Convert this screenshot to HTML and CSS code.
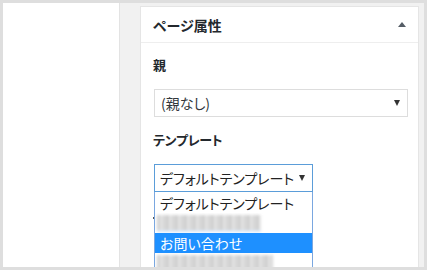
FILE: index.html
```html
<!DOCTYPE html>
<html lang="ja">
<head>
  <meta charset="UTF-8">
  <meta name="viewport" content="width=device-width, initial-scale=1.0">
  <title>ページ属性</title>
  <link rel="stylesheet" href="styles.css">
</head>
<body>
  <div class="frame">
    <div class="side"></div>
    <div class="main">
      <div class="postbox">
        <div class="postbox-head">
          <h2>ページ属性</h2>
          <span class="toggle"></span>
        </div>
        <div class="inside">
          <p class="label">親</p>
          <div class="select parent">
            <span>(親なし)</span>
            <span class="arrow"></span>
          </div>
          <p class="label">テンプレート</p>
          <div class="dropdown">
            <div class="select focused">
              <span>デフォルトテンプレート</span>
              <span class="arrow"></span>
            </div>
            <ul class="options">
              <li>デフォルトテンプレート</li>
              <li class="blurred"><span class="smudge" style="width: 104px"></span></li>
              <li class="selected">お問い合わせ</li>
              <li class="blurred"><span class="smudge" style="width: 116px"></span></li>
            </ul>
          </div>
        </div>
      </div>
    </div>
  </div>
</body>
</html>
```

FILE: styles.css
```css
body {
  margin: 0;
  font-family: "Noto Sans CJK JP", "Noto Sans", sans-serif;
  font-feature-settings: "palt";
  color: #23282d;
}

.frame {
  width: 427px;
  height: 270px;
  box-sizing: border-box;
  border: 3px solid #dedede;
  display: flex;
  overflow: hidden;
  background: #fff;
}

.side {
  width: 116px;
  background: #fff;
  border-right: 1px solid #e3e3e3;
}

.main {
  flex: 1;
  background: #f1f1f1;
  padding: 3px 5px 0 20px;
  overflow: hidden;
}

.postbox {
  width: 279px;
  height: 300px;
  box-sizing: border-box;
  background: #fff;
  border: 1px solid #e5e5e5;
}

.postbox-head {
  height: 35px;
  border-bottom: 1px solid #eee;
  display: flex;
  align-items: center;
  justify-content: space-between;
  padding: 0 12px;
}

.postbox-head h2 {
  margin: 0;
  font-size: 14px;
  font-weight: bold;
  line-height: 18px;
}

.toggle {
  width: 0;
  height: 0;
  border-left: 4px solid transparent;
  border-right: 4px solid transparent;
  border-bottom: 5px solid #555d66;
}

.inside {
  padding: 13px 12px 0;
}

.label {
  margin: 0 0 15px;
  font-size: 13px;
  font-weight: bold;
  line-height: 18px;
  letter-spacing: -0.3px;
}

.select {
  box-sizing: border-box;
  height: 28px;
  border: 1px solid #ddd;
  display: flex;
  align-items: center;
  justify-content: space-between;
  padding: 0 7px 0 6px;
  font-size: 14px;
  color: #32373c;
  background: #fff;
}

.select.parent {
  width: 254px;
  margin: 0 0 14px 1px;
}

.arrow {
  width: 0;
  height: 0;
  border-left: 3.5px solid transparent;
  border-right: 3.5px solid transparent;
  border-top: 6px solid #333;
}

.dropdown {
  position: relative;
  width: 159px;
  margin: 0 0 17px 1px;
}

/* bit of the next label peeking out beside the open list */
.dropdown::before {
  content: "";
  position: absolute;
  left: -1px;
  top: 53px;
  width: 2px;
  height: 2px;
  background: #555;
}

.select.focused {
  border-color: #5b9dd9;
  padding-left: 5px;
  color: #222;
}

.options {
  position: absolute;
  top: 100%;
  left: 0;
  z-index: 2;
  width: 159px;
  box-sizing: border-box;
  margin: 0;
  padding: 1px 0 0;
  list-style: none;
  background: #fff;
  border: 1px solid #7aa7e0;
  border-top: 0;
  font-size: 14px;
  color: #222;
}

.options li {
  height: 20px;
  line-height: 20px;
  padding-left: 5px;
  white-space: nowrap;
  overflow: hidden;
}

.options li.selected {
  background: #1e90ff;
  color: #fff;
}

.options li.blurred {
  padding-left: 2px;
  display: flex;
  align-items: center;
}

.smudge {
  display: block;
  height: 15px;
  background:
    repeating-linear-gradient(90deg, #c6c6c6 0 3px, #e4e4e4 3px 5px, #d2d2d2 5px 9px),
    #ddd;
  border-bottom: 2px solid #d3e3f6;
  filter: blur(1.5px);
  opacity: 0.85;
}
```
